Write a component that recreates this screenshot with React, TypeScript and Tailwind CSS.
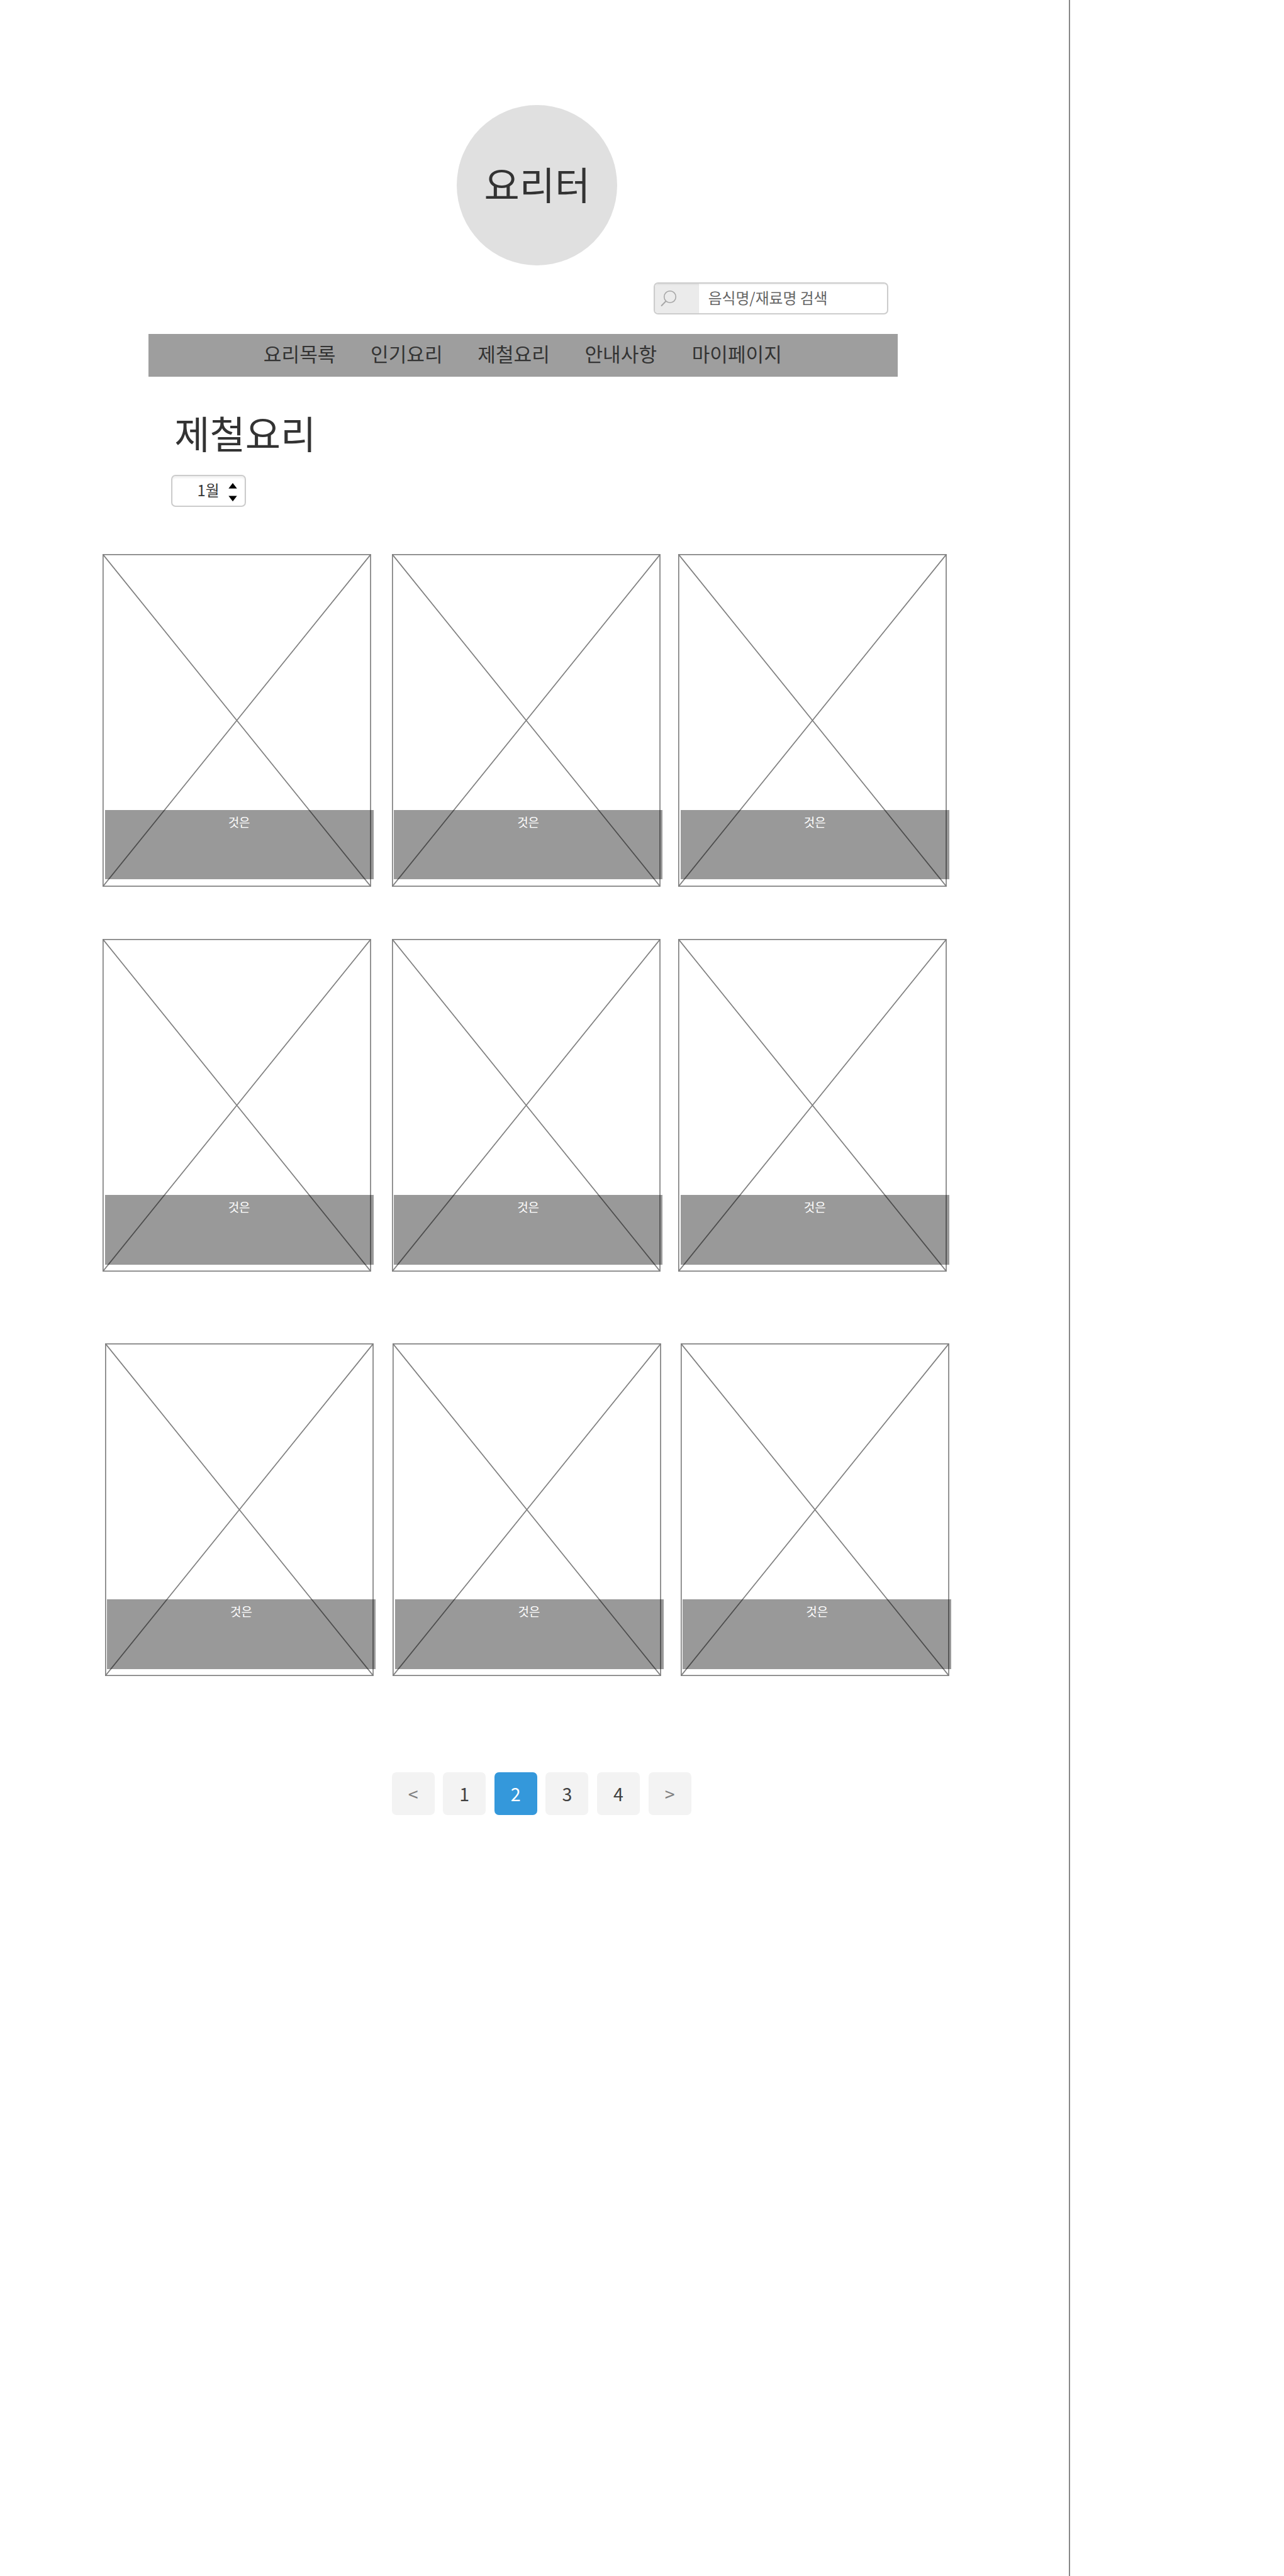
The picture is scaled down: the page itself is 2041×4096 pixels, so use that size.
const MENU = ["요리목록", "인기요리", "제철요리", "안내사항", "마이페이지"];

const PAGES = [
  { label: "<", style: "bg-[#f3f3f3] text-[#808080]" },
  { label: "1", style: "bg-[#f3f3f3] text-[#404040]" },
  { label: "2", style: "bg-[#3498db] text-white" },
  { label: "3", style: "bg-[#f3f3f3] text-[#404040]" },
  { label: "4", style: "bg-[#f3f3f3] text-[#404040]" },
  { label: ">", style: "bg-[#f3f3f3] text-[#808080]" },
];

function RecipeCard({ title }: { title: string }) {
  return (
    <article className="relative h-[529px] w-[426.9px] shrink-0">
      <svg className="block h-full w-full" viewBox="0 0 426.9 529" fill="none" stroke="#808080" strokeWidth="1.7">
        <rect x="0.85" y="0.85" width="425.2" height="527.3" />
        <path d="M0.85 0.85 426.05 528.15M426.05 0.85 0.85 528.15" />
      </svg>
      <div className="absolute top-[407px] left-[3.4px] h-[110.5px] w-[426.9px] bg-black/40 text-center text-[19px] leading-[37.8px] text-white">
        {title}
      </div>
    </article>
  );
}

export default function App() {
  return (
    <div className="flex h-[4096px] w-[2041px] overflow-hidden bg-white font-['Noto_Sans_CJK_KR',sans-serif] text-[#333]">
      <main className="w-[1699px] shrink-0 pt-[166.7px]">
        <header>
          <div className="ml-[726.3px] flex size-[255.1px] items-center justify-center rounded-full bg-[#e0e0e0] pb-[6px] text-[61.2px] leading-none">
            요리터
          </div>
          <div className="mt-[27.2px] ml-[1039.2px] flex h-[51px] w-[372.5px] overflow-hidden rounded-[7px] border-2 border-[#ccc] bg-white">
            <span className="w-[70px] shrink-0 bg-[#ebebeb] shadow-[inset_0_2px_2px_rgba(0,0,0,0.05)]">
              <svg className="mt-[11px] ml-[9px] size-[32px]" viewBox="0 0 32 32" fill="none" stroke="#a8a8a8">
                <circle cx="15" cy="10" r="9.3" strokeWidth="1.6" />
                <path d="M8.4 17 1.6 24" strokeWidth="2" strokeLinecap="round" />
              </svg>
            </span>
            <span className="flex-1 pl-[14.5px] text-[23.8px] leading-[43.2px] text-[#666] shadow-[inset_0_2px_2px_rgba(0,0,0,0.05)]">
              음식명/재료명 검색
            </span>
          </div>
          <nav className="mt-[30.7px] ml-[236.4px] flex h-[68px] w-[1190.6px] items-center justify-center gap-[55.6px] bg-[#9e9e9e] pr-[1.6px] pb-[6.8px] text-[31.15px] leading-none">
            {MENU.map((item) => (
              <a key={item}>{item}</a>
            ))}
          </nav>
        </header>

        <h1 className="mt-[55.1px] ml-[277.2px] h-[68px] text-[61.2px] leading-[68px]">제철요리</h1>
        <div className="mt-[33.4px] ml-[272.1px] flex h-[51px] w-[119px] rounded-[7px] border-2 border-[#ccc] bg-white shadow-[inset_0_3px_3px_rgba(0,0,0,0.06)]">
          <span className="ml-[39.4px] w-[35.6px] text-[23.8px] leading-[43.2px] whitespace-nowrap">1월</span>
          <svg className="mt-[10.5px] ml-[14px] h-[30px] w-[14px]" viewBox="0 0 14 30" fill="#000">
            <path d="M7 0 13.7 8.8H0.3ZM7 29.2 13.7 20.4H0.3Z" />
          </svg>
        </div>

        <section className="mt-[74.8px]">
          <div className="ml-[163.3px] flex">
            <RecipeCard title="것은" />
            <div className="ml-[32.6px] flex gap-[28.7px]">
              <RecipeCard title="것은" />
              <RecipeCard title="것은" />
            </div>
          </div>
          <div className="mt-[83.3px] ml-[163.3px] flex">
            <RecipeCard title="것은" />
            <div className="ml-[32.6px] flex gap-[28.7px]">
              <RecipeCard title="것은" />
              <RecipeCard title="것은" />
            </div>
          </div>
          <div className="mt-[114px] ml-[166.7px] flex gap-[30.7px]">
            <RecipeCard title="것은" />
            <RecipeCard title="것은" />
            <RecipeCard title="것은" />
          </div>
        </section>

        <div className="mt-[153.2px] ml-[622.6px] flex gap-[13.6px]">
          {PAGES.map((page) => (
            <button
              key={page.label}
              className={`h-[68px] w-[68px] rounded-[7px] text-center text-[28.6px] leading-[68px] ${page.style}`}
            >
              {page.label}
            </button>
          ))}
        </div>
      </main>
      <div className="w-[2px] shrink-0 bg-[#888]" />
    </div>
  );
}
